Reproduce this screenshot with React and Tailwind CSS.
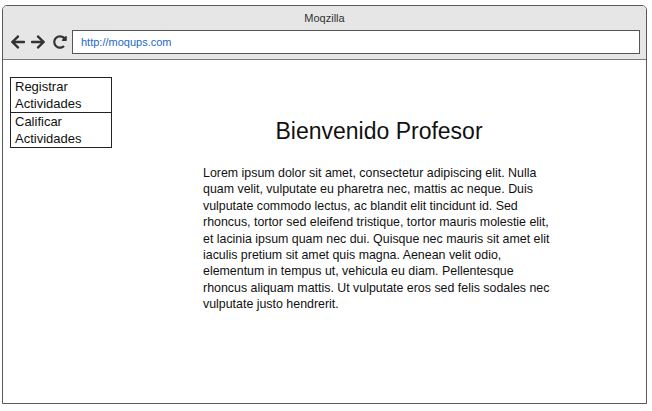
import React from "react";
import { FaArrowLeft, FaArrowRight, FaRedoAlt } from "react-icons/fa";

const lines = [
  "Lorem ipsum dolor sit amet, consectetur adipiscing elit. Nulla",
  "quam velit, vulputate eu pharetra nec, mattis ac neque. Duis",
  "vulputate commodo lectus, ac blandit elit tincidunt id. Sed",
  "rhoncus, tortor sed eleifend tristique, tortor mauris molestie elit,",
  "et lacinia ipsum quam nec dui. Quisque nec mauris sit amet elit",
  "iaculis pretium sit amet quis magna. Aenean velit odio,",
  "elementum in tempus ut, vehicula eu diam. Pellentesque",
  "rhoncus aliquam mattis. Ut vulputate eros sed felis sodales nec",
  "vulputate justo hendrerit.",
];

export default function App() {
  return (
    <div className="w-[652px] h-[411px] bg-white pt-[5px] pl-[2px] font-['Liberation_Sans',Arial,sans-serif]">
      <div className="w-[645px] h-[399px] border border-[#5a5a5a] rounded-t-[5px] flex flex-col overflow-hidden">
        <div className="h-[54px] bg-[#e6e6e6] border-b border-[#7a7a7a] flex flex-col">
          <div className="h-[24px] flex items-center justify-center text-[11px] text-[#333]">
            Moqzilla
          </div>
          <div className="flex items-center pl-[7px] pr-[6px]">
            <FaArrowLeft className="w-[16px] h-[16px] text-[#333]" />
            <FaArrowRight className="w-[16px] h-[16px] text-[#333] ml-[4px]" />
            <FaRedoAlt className="w-[14px] h-[14px] text-[#333] ml-[7px]" />
            <div className="ml-[5px] flex-1 h-[24px] bg-white border border-[#555] flex items-center pl-[8px] text-[11px] text-[#2369c8]">
              http://moqups.com
            </div>
          </div>
        </div>
        <div className="flex-1 bg-white flex">
          <div className="pl-[7px] pt-[17px]">
            <div className="w-[102px] border border-[#222] text-[13px] leading-[17px] text-[#111]">
              <div className="pl-[4px] border-b border-[#222]">
                Registrar
                <br />
                Actividades
              </div>
              <div className="pl-[4px]">
                Calificar
                <br />
                Actividades
              </div>
            </div>
          </div>
          <div className="ml-[91px] w-[352px] flex flex-col items-center pt-[57px]">
            <div className="text-[23px] leading-[28px] text-[#111]">Bienvenido Profesor</div>
            <div className="mt-[20px] self-stretch text-[12.4px] leading-[16.4px] text-[#111]">
              {lines.map((l, i) => (
                <div key={i} className="whitespace-nowrap">{l}</div>
              ))}
            </div>
          </div>
        </div>
      </div>
    </div>
  );
}
